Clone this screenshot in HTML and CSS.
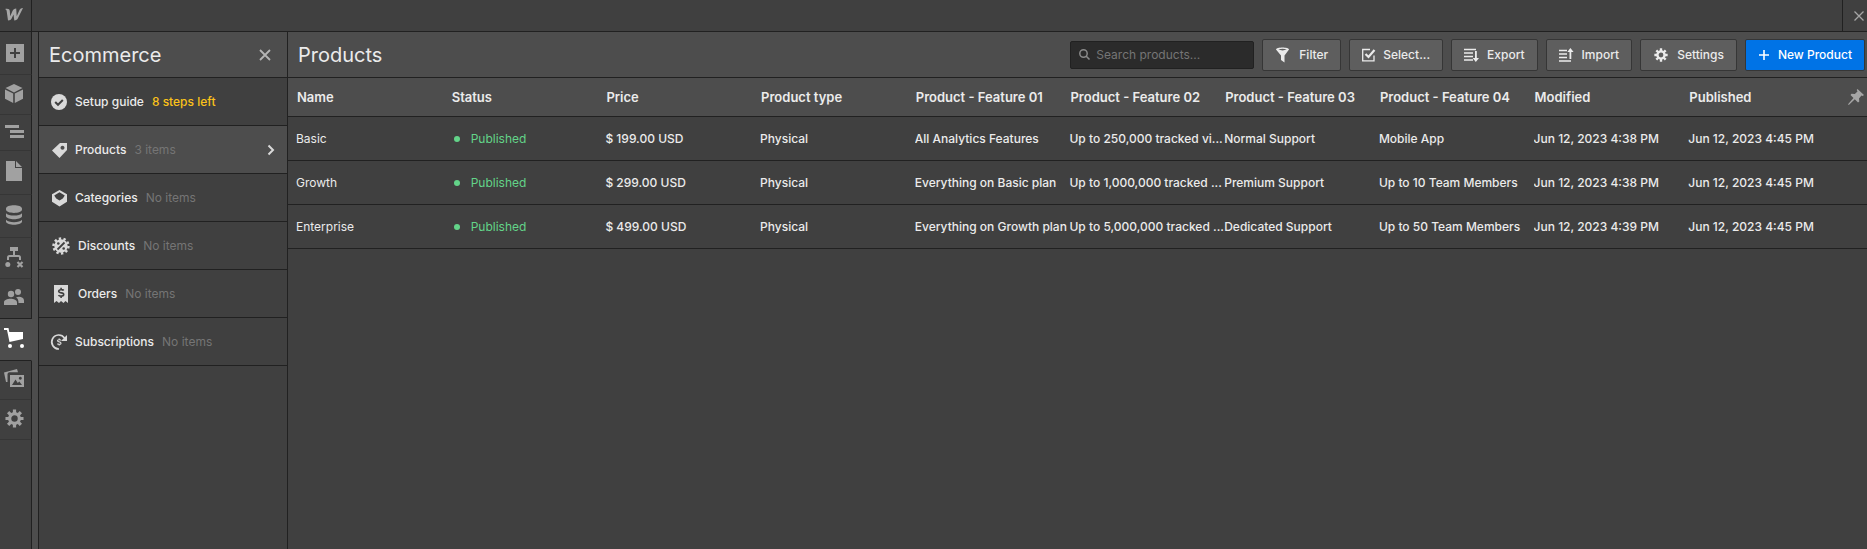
FILE: index.html
```html
<!DOCTYPE html>
<html lang="en">
<head>
    <meta charset="UTF-8">
    <meta name="viewport" content="width=device-width, initial-scale=1.0">
    <title>Ecommerce - Products</title>
    <link rel="stylesheet" href="styles.css">
</head>
<body>
    <!-- shared gear shape -->
    <svg class="defs" width="0" height="0">
        <symbol id="gear" viewBox="0 0 20 20">
            <path fill="none" stroke="currentColor" stroke-width="3.4" d="M10 4.9a5.1 5.1 0 1 0 0 10.2a5.1 5.1 0 1 0 0-10.2z"/>
            <path stroke="currentColor" stroke-width="3.4" d="M10 .5v4M10 15.5v4M.5 10h4M15.5 10h4M3.3 3.3l2.8 2.8M13.9 13.9l2.8 2.8M3.3 16.7l2.8-2.8M13.9 6.1l2.8-2.8"/>
        </symbol>
    </svg>

    <header class="topbar">
        <a href="#" class="logo" aria-label="Home">
            <svg width="18" height="13" viewBox="0 0 18 13"><path fill="currentColor" d="M18 0C15.800 0 14.900 1.100 14.300 2.500L11.700 8.200 11.200.5C9.300.5 8.200 1.400 7.500 2.900L5.200 8.200 4.800 3C4.600 1 3.200.5 0 1 1.300 1.400 1.600 2.300 1.700 3.300L3 12.500C5 12.500 6 11.700 6.600 10.500L8.500 6.500 9.300 12.500C11.200 12.500 12.200 11.600 12.900 10.300Z"/></svg>
        </a>
        <button class="close-top" aria-label="Close">
            <svg width="10" height="10" viewBox="0 0 10 10"><path stroke="currentColor" stroke-width="1.3" d="M.5.5l9 9M9.500.5l-9 9"/></svg>
        </button>
    </header>

    <div class="app">
        <nav class="rail">
            <a href="#" aria-label="Add"><svg width="20" height="20" viewBox="0 0 20 20"><path fill="currentColor" fill-rule="evenodd" d="M2 2h18v18H2zM10 6v4H6v2h4v4h2v-4h4v-2h-4V6z"/></svg></a>
            <a href="#" aria-label="Components"><svg width="20" height="17" viewBox="0 0 20 17"><path fill="currentColor" d="M10-1l8.500 4L10 7.400 1.500 3zM1 4.600l8.200 4V18L1 13.800zM19 4.600l-8.200 4V18l8.200-4.200z"/></svg></a>
            <a href="#" aria-label="Navigator"><svg width="20" height="13" viewBox="0 0 20 13"><path fill="currentColor" d="M1 0h14v3H1zM6 5h14v3H6zM6 10h14v3H6z"/></svg></a>
            <a href="#" aria-label="Pages"><svg width="20" height="21" viewBox="0 0 20 21"><path fill="currentColor" d="M2 0h9v7h7v13H2zM12 0l6 6h-6z"/></svg></a>
            <a href="#" aria-label="CMS"><svg width="20" height="20" viewBox="0 0 20 20"><path fill="currentColor" d="M2 3.500C2-1 18-1 18 3.500v1C18 9 2 9 2 4.500zM2 8.200c2 3.200 14 3.200 16 0v3c-1 4-15 4-16 0zM2 14.800c2 3.200 14 3.200 16 0v2c-1 4-15 4-16 0z"/></svg></a>
            <a href="#" aria-label="Logic"><svg width="20" height="18" viewBox="0 0 20 18"><path fill="currentColor" d="M6-1h8v4H6z"/><circle cx="3.800" cy="16.500" r="2.500" fill="currentColor"/><path fill="none" stroke="currentColor" stroke-width="2" d="M10 3v5M4 12V9.500Q4 8 5.500 8h9Q16 8 16 9.500V12"/><path stroke="currentColor" stroke-width="2.200" d="M13.500 14l5 5M18.500 14l-5 5"/></svg></a>
            <a href="#" aria-label="Users"><svg width="20" height="17" viewBox="0 0 20 17"><g fill="currentColor"><circle cx="7" cy="5" r="3.200"/><circle cx="14" cy="3" r="3"/><path d="M0 16v-2.500C0 8.500 13 8.500 13 13.500V16zM14.500 14H20v-2.500c0-3.500-5-4.500-8-3 1.800.9 2.500 2.500 2.500 5.500z"/></g></svg></a>
            <a href="#" class="active" aria-label="Ecommerce"><svg width="20" height="19" viewBox="0 0 20 19"><g fill="currentColor"><path d="M0-1h4.500l.8 4H19v7L5.500 13 3 1H0z"/><circle cx="6" cy="17" r="2"/><circle cx="18" cy="17" r="2"/></g></svg></a>
            <a href="#" aria-label="Assets"><svg width="20" height="16" viewBox="0 0 20 16"><path fill="currentColor" d="M0 1.500L13-2l1 3.200H5.500A2 2 0 0 0 3.500 3v8L2 11z"/><path fill="currentColor" fill-rule="evenodd" d="M6 4h14v12H6zM8 14h10l-2.700-3.500-1.500 1.500-2.300-3.500zM16.300 5.700a1.500 1.500 0 1 0 .01 0z"/></svg></a>
            <a href="#" aria-label="Settings"><svg width="20" height="17"><use href="#gear" x="1" y="-1" width="19" height="19"/></svg></a>
        </nav>

        <aside class="sidebar">
            <div class="panel-head">
                <h2>Ecommerce</h2>
                <button class="close" aria-label="Close panel"><svg width="12" height="12" viewBox="0 0 12 12"><path stroke="currentColor" stroke-width="1.800" d="M1 1l10 10M11 1L1 11"/></svg></button>
            </div>
            <ul class="menu">
                <li><a href="#">
                    <svg width="16" height="16" viewBox="0 0 16 16"><circle cx="8" cy="8" r="8" fill="currentColor"/><path fill="none" stroke="#404040" stroke-width="2" d="M4.200 8l2.800 2.800L11.800 6"/></svg>
                    <span class="label">Setup guide</span><span class="steps">8 steps left</span>
                </a></li>
                <li class="selected"><a href="#">
                    <svg width="16" height="16" viewBox="0 0 16 16"><path fill="currentColor" fill-rule="evenodd" d="M9 1h7v7l-7.500 8L1 8.500zM11.500 3.700a2 2 0 1 0 .01 0z"/></svg>
                    <span class="label">Products</span><span class="count">3 items</span>
                    <svg class="arrow" width="8" height="12" viewBox="0 0 8 12"><path fill="none" stroke="currentColor" stroke-width="2" d="M1.500 1.500L6 6l-4.500 4.500"/></svg>
                </a></li>
                <li><a href="#">
                    <svg width="16" height="16" viewBox="0 0 16 16"><path fill="currentColor" fill-rule="evenodd" d="M8.500 0L16 4.200v7.600L8.500 16.500 1 11.800V4.200zM3.200 5.500l2 3 3.300 2 3.300-2 2-3-5.300-3.200z"/></svg>
                    <span class="label">Categories</span><span class="count">No items</span>
                </a></li>
                <li><a href="#">
                    <svg width="19" height="18" viewBox="0 0 19 18"><circle cx="10" cy="9" r="6.700" fill="currentColor"/><circle cx="10" cy="9" r="7.500" fill="none" stroke="currentColor" stroke-width="2.400" stroke-dasharray="2.350 2.350"/><path stroke="#404040" stroke-width="1.800" d="M6.500 12.500l7-7"/><circle cx="7.300" cy="6.500" r="1.300" fill="#404040"/><circle cx="12.700" cy="11.500" r="1.300" fill="#404040"/></svg>
                    <span class="label">Discounts</span><span class="count">No items</span>
                </a></li>
                <li><a href="#">
                    <svg width="19" height="18" viewBox="0 0 19 18"><path fill="currentColor" d="M3 0h14v18l-2.500-2-2 2-2.500-2-2 2-2.500-2L3 18z"/><path fill="none" stroke="#404040" stroke-width="1.600" d="M12.700 5.500c-.8-1.200-5-1.200-5 .8 0 2.400 5 .8 5 3.200 0 2-4.400 2-5.200.6M10.100 2.800v2M10.100 11v2"/></svg>
                    <span class="label">Orders</span><span class="count">No items</span>
                </a></li>
                <li><a href="#">
                    <svg width="16" height="16" viewBox="0 0 16 16"><path fill="none" stroke="currentColor" stroke-width="1.700" d="M8 15A7 7 0 1 1 13.500 4"/><path fill="currentColor" d="M16 1v6h-6z"/><path fill="none" stroke="currentColor" stroke-width="1.200" d="M9.800 6.300c-.6-.9-3.300-.8-3.300.5 0 1.700 3.500.6 3.500 2.400 0 1.500-3 1.400-3.600.4M8.200 4.600v1.200M8.200 10.400v1.200"/></svg>
                    <span class="label">Subscriptions</span><span class="count">No items</span>
                </a></li>
            </ul>
        </aside>

        <main class="main">
            <div class="toolbar">
                <h1>Products</h1>
                <div class="search">
                    <svg width="11" height="11" viewBox="0 0 11 11"><circle cx="4.500" cy="4.500" r="3.700" fill="none" stroke="currentColor" stroke-width="1.500"/><path stroke="currentColor" stroke-width="1.600" d="M7 7l3.500 3.500"/></svg>
                    <input type="text" placeholder="Search products..." aria-label="Search products">
                </div>
                <button class="btn"><svg width="16" height="16" viewBox="0 0 16 16"><path fill="currentColor" fill-rule="evenodd" d="M1 2.500C1-.3 14-.3 14 2.500L9.500 8.500v7L6 13V8.500zM3.300 2.600c2.500 1.100 6 1.100 8.500 0-2.500-1-6-1-8.500 0z"/></svg>Filter</button>
                <button class="btn"><svg width="13" height="14" viewBox="0 0 13 14"><path fill="none" stroke="currentColor" stroke-width="1.300" d="M8 1.500H.7v11.300h11.300V7.500"/><path fill="none" stroke="currentColor" stroke-width="2.200" d="M3.500 6l3 3 6-7"/></svg>Select...</button>
                <button class="btn"><svg width="15" height="14" viewBox="0 0 15 14"><path stroke="currentColor" stroke-width="1.400" d="M0 1.500h12M0 5h9M0 8.500h9M0 12h9"/><path fill="currentColor" d="M11 3h1.800v7H15l-3.200 4-3.100-4H11z"/></svg>Export</button>
                <button class="btn"><svg width="15" height="14" viewBox="0 0 15 14"><path stroke="currentColor" stroke-width="1.400" d="M0 2.500h8M0 6h8M0 9.500h8M0 13h12"/><path fill="currentColor" d="M10.500 11V4H8.300L11.400 0l3.200 4h-2.300v7z"/></svg>Import</button>
                <button class="btn"><svg width="16" height="14"><use href="#gear" x="1" width="14" height="14"/></svg>Settings</button>
                <button class="btn primary"><svg width="12" height="10" viewBox="0 0 12 10"><path stroke="currentColor" stroke-width="1.600" d="M6 0v10M1 5h10"/></svg>New Product</button>
            </div>

            <table class="products">
                <thead>
                    <tr>
                        <th>Name</th>
                        <th>Status</th>
                        <th>Price</th>
                        <th>Product type</th>
                        <th>Product - Feature 01</th>
                        <th>Product - Feature 02</th>
                        <th>Product - Feature 03</th>
                        <th>Product - Feature 04</th>
                        <th>Modified</th>
                        <th>Published</th>
                        <th class="pin"><svg width="16" height="16" viewBox="0 0 16 16"><path fill="currentColor" d="M9.500 0L16 6l-1.300 1-1.200-.5-2.500 3 .3 3-1.300 1L6.800 10.300.8 16 0 15.300l5.500-6.200L2.500 6l1-1.300 3.300.2 2.700-2.500-.8-1.300z"/></svg></th>
                    </tr>
                </thead>
                <tbody>
                    <tr>
                        <td class="name">Basic</td>
                        <td class="status">Published</td>
                        <td>$ 199.00 USD</td>
                        <td>Physical</td>
                        <td>All Analytics Features</td>
                        <td>Up to 250,000 tracked vi...</td>
                        <td>Normal Support</td>
                        <td>Mobile App</td>
                        <td>Jun 12, 2023 4:38 PM</td>
                        <td>Jun 12, 2023 4:45 PM</td>
                    </tr>
                    <tr>
                        <td class="name">Growth</td>
                        <td class="status">Published</td>
                        <td>$ 299.00 USD</td>
                        <td>Physical</td>
                        <td>Everything on Basic plan</td>
                        <td>Up to 1,000,000 tracked ...</td>
                        <td>Premium Support</td>
                        <td>Up to 10 Team Members</td>
                        <td>Jun 12, 2023 4:38 PM</td>
                        <td>Jun 12, 2023 4:45 PM</td>
                    </tr>
                    <tr>
                        <td class="name">Enterprise</td>
                        <td class="status">Published</td>
                        <td>$ 499.00 USD</td>
                        <td>Physical</td>
                        <td>Everything on Growth plan</td>
                        <td>Up to 5,000,000 tracked ...</td>
                        <td>Dedicated Support</td>
                        <td>Up to 50 Team Members</td>
                        <td>Jun 12, 2023 4:39 PM</td>
                        <td>Jun 12, 2023 4:45 PM</td>
                    </tr>
                </tbody>
            </table>
        </main>
    </div>
</body>
</html>
```
FILE: styles.css
```css
* {
    box-sizing: border-box;
}

body {
    margin: 0;
    min-height: 100vh;
    display: flex;
    flex-direction: column;
    background: #404040;
    color: #ebebeb;
    font-family: Inter, "Liberation Sans", sans-serif;
    font-size: 12px;
    line-height: 16px;
}

a {
    color: inherit;
    text-decoration: none;
}

button {
    font: inherit;
    color: inherit;
    background: none;
    border: none;
    padding: 0;
    cursor: pointer;
}

svg {
    display: block;
    flex-shrink: 0;
    overflow: visible;
}

h1, h2 {
    margin: 0;
    font-size: 20px;
    line-height: 24px;
    font-weight: 400;
}

.defs {
    position: absolute;
}

/* top bar */
.topbar {
    display: flex;
    justify-content: space-between;
    height: 32px;
    border-bottom: 1px solid #212121;
    color: #a6a6a6;
}

.logo {
    width: 32px;
    padding: 8px 0 0 5px;
    border-right: 1px solid #212121;
}

.close-top {
    display: flex;
    align-items: center;
    width: 25px;
    padding-left: 11px;
    border-left: 1px solid #212121;
}

.app {
    flex: 1;
    display: flex;
}

/* icon rail */
.rail {
    display: flex;
    flex-direction: column;
    width: 32px;
    color: #a1a1a1;
}

.rail::after {
    content: "";
    flex: 1;
    border-right: 1px solid #212121;
}

.rail a {
    padding: 10px 4px 12px;
    border-right: 1px solid #212121;
    border-bottom: 1px solid #363636;
}

.rail a:has(+ .active) {
    border-bottom-color: #212121;
}

.rail .active {
    background: #4d4d4d;
    color: #fff;
    border-right-color: #4d4d4d;
    border-bottom-color: #212121;
}

/* ecommerce panel */
.sidebar {
    width: 256px;
    border-left: 6px solid #4d4d4d;
    border-right: 1px solid #212121;
    box-shadow: inset 1px 0 #212121;
    padding-left: 1px;
}

.panel-head {
    display: flex;
    align-items: center;
    justify-content: space-between;
    height: 46px;
    padding: 0 16px 0 10px;
    background: #4d4d4d;
    border-bottom: 1px solid #212121;
}

.close {
    color: #b5b5b5;
}

.menu {
    margin: 0;
    padding: 0;
    list-style: none;
}

.menu a {
    display: flex;
    align-items: center;
    height: 48px;
    padding: 0 12px;
    border-bottom: 1px solid #212121;
    color: #d9d9d9;
}

.menu .selected {
    background: #4d4d4d;
}

.label {
    margin: 0 8px;
    color: #ebebeb;
    font-weight: 500;
}

.count {
    color: #757575;
}

.steps {
    color: #fbc21a;
    font-weight: 500;
}

.arrow {
    margin-left: auto;
}

/* products */
.main {
    flex: 1;
    min-width: 0;
}

.toolbar {
    display: flex;
    align-items: center;
    gap: 8px;
    height: 46px;
    padding: 0 2px 0 10px;
    background: #4d4d4d;
    border-bottom: 1px solid #212121;
}

.toolbar h1 {
    margin-right: auto;
}

.search {
    display: flex;
    align-items: center;
    gap: 6px;
    width: 184px;
    height: 28px;
    padding: 0 8px;
    background: #2b2b2b;
    border: 1px solid #212121;
    border-radius: 2px;
    color: #8a8a8a;
}

.search input {
    flex: 1;
    min-width: 0;
    padding: 0;
    border: none;
    outline: none;
    background: none;
    color: #ebebeb;
    font: inherit;
}

.search input::placeholder {
    color: #757575;
}

.btn {
    display: flex;
    align-items: center;
    gap: 8px;
    height: 32px;
    padding: 0 12px;
    background: #5e5e5e;
    border: 1px solid #363636;
    border-radius: 2px;
    font-weight: 500;
}

.primary {
    background: #0073e6;
    color: #fff;
}

.products {
    display: block;
}

.products thead,
.products tbody {
    display: block;
}

.products tr {
    display: grid;
    grid-template-columns: repeat(10, minmax(0, 1fr)) 24px;
    align-items: center;
    height: 44px;
    padding-left: 8px;
    border-bottom: 1px solid #212121;
}

.products thead tr {
    height: 39px;
    background: #4d4d4d;
}

.products th,
.products td {
    padding: 0;
    overflow: hidden;
    text-align: left;
    text-overflow: ellipsis;
    white-space: nowrap;
}

.products th {
    padding-left: 1px;
    font-size: 13px;
    font-weight: 600;
}

.products td {
    font-weight: 500;
}

.products .name {
    font-weight: 400;
}

.products .pin {
    padding-left: 5px;
    color: #a6a6a6;
}

.products .status {
    display: flex;
    align-items: center;
    gap: 11px;
    padding-left: 3px;
    color: #63d489;
    font-weight: 400;
}

.status::before {
    content: "";
    width: 6px;
    height: 6px;
    border-radius: 50%;
    background: currentColor;
}
```
